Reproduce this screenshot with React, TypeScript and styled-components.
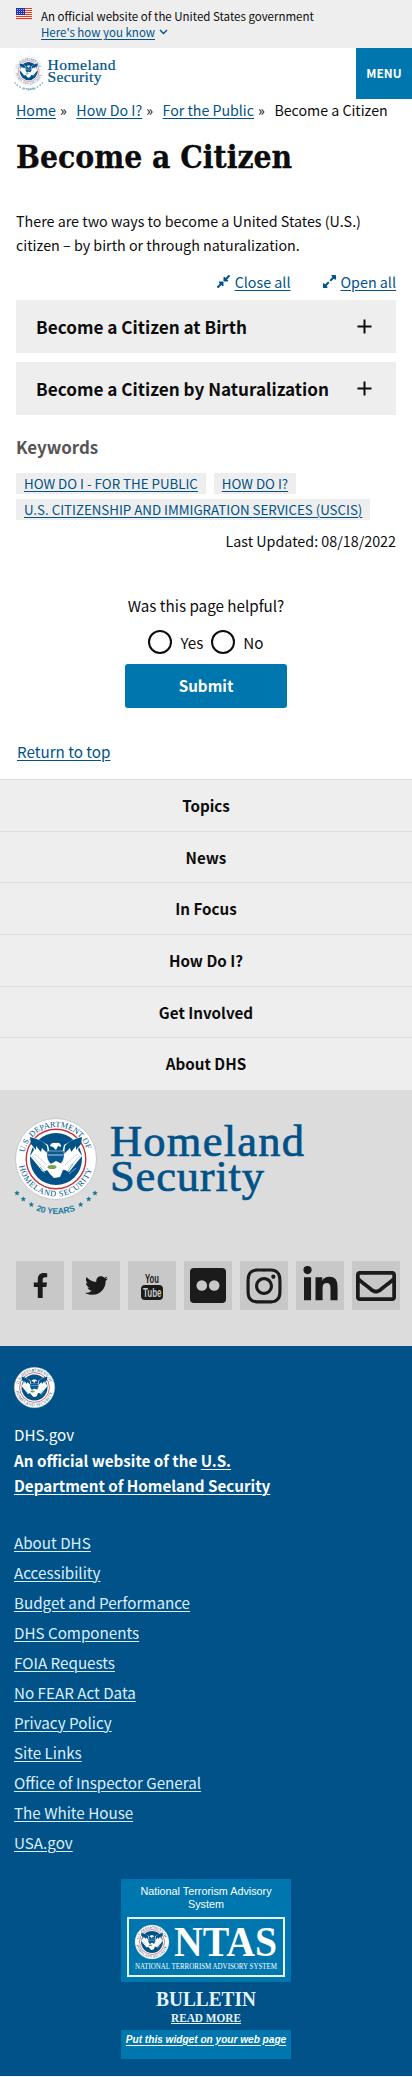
import React from 'react';
import styled, { createGlobalStyle } from 'styled-components';
import { FaFacebookF, FaTwitter, FaInstagram, FaLinkedinIn, FaRegEnvelope, FaCompressAlt, FaExpandAlt } from 'react-icons/fa';

const sans = `"Noto Sans CJK SC", "Noto Sans", sans-serif`;
const GlobalStyle = createGlobalStyle`
  *, *::before, *::after { box-sizing: border-box; }
  body { margin: 0; background: #fff; }
  h1, h2, h3, p, ul { margin: 0; padding: 0; }
  ul { list-style: none; }
  svg { display: block; overflow: visible; }
`;

const Page = styled.div`
  width: 412px;
  font-family: ${sans};
  font-size: 15.2px;
  line-height: 24px;
  color: #0c0c0c;
  white-space: nowrap;
`;

const Link = styled.a`
  color: #005288;
  text-decoration: underline;
  text-decoration-thickness: 1px;
  text-underline-offset: 2px;
`;

const Banner = styled.header`
  display: flex;
  height: 48px;
  padding: 8px 16px 0;
  gap: 9px;
  background: #eee;
  font-size: 11.5px;
  line-height: 16px;
  svg { flex: none; }
`;
const BannerToggle = styled.div`
  display: flex;
  align-items: center;
  gap: 4px;
`;

const Masthead = styled.div`
  display: flex;
  justify-content: space-between;
  height: 50px;
  padding-left: 14px;
`;
const HomeLink = styled.a`
  padding-top: 8px;
`;
const MenuButton = styled.button`
  width: 56px;
  height: 51px;
  border: 0;
  padding: 0 0 2px;
  background: #0076ae;
  color: #fff;
  font: bold 11.9px/48px ${sans};
`;

const Breadcrumb = styled.nav`
  display: flex;
  height: 24px;
  padding-left: 16px;
  gap: 9.6px;
  font-size: 14.2px;
  line-height: 24px;
`;
const Crumb = styled.span`
  display: flex;
  gap: 4px;
`;

const Main = styled.main`
  padding: 0 16px;
`;
const Title = styled.h1`
  height: 87px;
  padding-top: 15px;
  font: bold 31.5px/40px "DejaVu Serif Condensed", "DejaVu Serif", serif;
  -webkit-text-stroke: 0.3px #0c0c0c;
`;
const Intro = styled.p`
  font-size: 14.3px;
`;
const Controls = styled.div`
  display: flex;
  justify-content: flex-end;
  gap: 31px;
  height: 43px;
  padding-top: 13px;
  font-size: 14.3px;
`;
const Control = styled.span`
  display: flex;
  gap: 4px;
  color: #005288;
  svg { margin-top: 4px; }
`;
const Accordion = styled.div`
  display: flex;
  flex-direction: column;
  gap: 9px;
`;
const AccordionItem = styled.h2`
  display: flex;
  align-items: center;
  justify-content: space-between;
  height: 53px;
  padding: 0 24px 0 20px;
  background: #eee;
  font-size: 17.15px;
  line-height: 53px;
`;
const KeywordsTitle = styled.h3`
  margin-top: 20px;
  color: #555;
  font-size: 16.9px;
  line-height: 24px;
`;
const Tags = styled.div`
  display: flex;
  flex-wrap: wrap;
  gap: 5px 8px;
  margin-top: 14px;
`;
const Tag = styled.span`
  padding: 0 8px;
  height: 21px;
  background: #eee;
  font-size: 13.3px;
  line-height: 21px;
`;
const Updated = styled.p`
  margin-top: 8px;
  font-size: 14.3px;
  line-height: 25px;
  text-align: right;
`;
const Feedback = styled.form`
  display: flex;
  flex-direction: column;
  align-items: center;
  margin-top: 40px;
`;
const Choices = styled.div`
  display: flex;
  align-items: center;
  gap: 8px;
  height: 24px;
  margin-top: 13px;
`;
const Choice = styled.label`
  display: flex;
  align-items: center;
  gap: 8px;
`;
const Radio = styled.span`
  width: 24px;
  height: 24px;
  border: 2px solid #0c0c0c;
  border-radius: 50%;
`;
const Submit = styled.button`
  width: 162px;
  height: 44px;
  margin-top: 10px;
  padding: 0 0 2px;
  border: 0;
  border-radius: 3px;
  background: #0076ae;
  color: #fff;
  font: bold 15.2px/42px ${sans};
`;
const ReturnTop = styled.div`
  height: 40px;
  margin-top: 31px;
  padding: 0 1px;
`;

const FooterNav = styled.nav`
  height: 311px;
  background: #eee;
`;
const FooterNavItem = styled.div`
  height: 51.7px;
  border-top: 1px solid #dfdfdf;
  text-align: center;
  font-weight: bold;
  line-height: 51px;
`;

const SocialSection = styled.section`
  height: 256px;
  padding: 26px 12px 0 14px;
  background: #dcdcdc;
`;
const SocialRow = styled.div`
  display: flex;
  gap: 8px;
  margin: 45px 0 0 2px;
`;
const SocialTile = styled.a`
  display: flex;
  align-items: center;
  justify-content: center;
  width: 48px;
  height: 49px;
  background: #c8c8c8;
  color: #1b1b1b;
`;

const Identifier = styled.footer`
  height: 730px;
  padding: 21px 14px 0;
  background: #005288;
  color: #fff;
  ${Link} { color: inherit; }
`;
const Agency = styled.div`
  margin-top: 14px;
  line-height: 25.5px;
`;
const AgencyName = styled.p`
  font-weight: bold;
`;
const FooterLinks = styled.ul`
  margin-top: 28px;
  color: #dceefb;
  li { height: 30px; line-height: 30px; }
`;

const Widget = styled.aside`
  display: flex;
  flex-direction: column;
  align-items: center;
  width: 170px;
  margin: 22px auto 0;
  font-family: "Liberation Sans", Arial, sans-serif;
`;
const WidgetTop = styled.div`
  width: 100%;
  height: 103px;
  padding: 6px 6px 0;
  background: #0076ae;
  font-size: 10.8px;
  line-height: 13px;
  text-align: center;
  svg { margin-top: 6px; }
`;
const Bulletin = styled.div`
  height: 48px;
  padding-top: 10px;
  color: #e4f4fc;
`;
const WidgetBottom = styled.div`
  width: 100%;
  height: 29px;
  padding-top: 3px;
  background: #0076ae;
  font-size: 10.1px;
  line-height: 13px;
  font-style: italic;
  font-weight: bold;
  text-align: center;
`;

/* Department seal, centred on 0,0 with a radius of 40 */
const SealArt = ({ id }: { id: string }) => (
  <g>
    <defs>
      <path id={`${id}-top`} d="M-31.5 -6.5 A32.2 32.2 0 0 1 31.5 -6.5" />
      <path id={`${id}-bottom`} d="M-37 7 A37.7 37.7 0 0 0 37 7" />
    </defs>
    <circle r="40.5" fill="#fff" stroke="#b5bcc0" strokeWidth=".7" />
    <g fill="#005288" fontFamily="Liberation Serif, serif" fontSize="8.2">
      <text textLength="84"><textPath href={`#${id}-top`} textLength="84">U.S. DEPARTMENT OF</textPath></text>
      <text textLength="100"><textPath href={`#${id}-bottom`} textLength="100">HOMELAND SECURITY</textPath></text>
    </g>
    <circle r="29.8" fill="#fff" stroke="#c8323e" strokeWidth="1.4" />
    <circle r="26" fill="#005288" />
    <path d="M-26 -22 Q-20 -22 -15 -18 L-8 -14 L-3 8 L-13 13 L-26 -3 L-22 -9 Z M26 -22 Q20 -22 15 -18 L8 -14 L3 8 L13 13 L26 -3 L22 -9 Z" fill="#fff" />
    <path d="M-26 -22 Q-13 -19 -9 -13 L-8 -5 L-14 -11 L-15 -7 L-20 -13 L-20 -9 L-25 -15 Z M26 -22 Q13 -19 9 -13 L8 -5 L14 -11 L15 -7 L20 -13 L20 -9 L25 -15 Z" fill="#005288" />
    <path d="M-24 -3 L-12 9 M-21 -5 L-9 6 M24 -3 L12 9 M21 -5 L9 6" stroke="#b9d0df" strokeWidth=".8" />
    <path d="M-6 -13 Q-5 -17 0 -16 Q5 -17 5 -12 L2 -13 L0 -9 L-3 -12 Z" fill="#fff" />
    <path d="M-9 -8 H8 V-2 Q7 5 0 8 Q-8 5 -9 -2 Z" fill="#0a5a91" stroke="#dce8ef" strokeWidth=".5" />
    <path d="M-8 -4 H7" stroke="#fff" strokeWidth=".7" />
    <path d="M-7 6 L0 2 L8 6 L13 11 L7 11 L4 18 L-2 19 L-6 15 L-9 11 L-15 12 Z" fill="#fff" />
    <ellipse cx="-4" cy="8" rx="4.5" ry="2" fill="#7ba052" />
    <path d="M-16 8 L-11 14 M17 5 L12 12 M20 9 L13 15" stroke="#75a5c4" strokeWidth="1" />
  </g>
);

const Seal = ({ id, size }: { id: string; size: number }) => (
  <svg width={size} height={size} viewBox="-41 -41 82 82"><SealArt id={id} /></svg>
);

const starPoints = '0,-2.4 .7,-.8 2.4,-.7 1.1,.4 1.5,2.1 0,1.2 -1.5,2.1 -1.1,.4 -2.4,-.7 -.7,-.8';
const stars = [[-39, 34], [-32.7, 40], [-24.7, 45.5], [24.7, 45.5], [32.7, 40], [39, 34]];

const Logo = ({ id, scale }: { id: string; scale: number }) => (
  <svg width={294 * scale} height={100 * scale} viewBox="0 0 294 100">
    <g transform="translate(42 43)">
      <SealArt id={id} />
      <g fill="#197a9e">
        {stars.map(([x, y]) => <polygon key={x} points={starPoints} transform={`translate(${x} ${y}) scale(1.15)`} />)}
        <path id={`${id}-years`} d="M-20 51.5 A60 60 0 0 0 20 51.5" fill="none" />
        <text fontFamily={'"Liberation Sans", sans-serif'} fontSize="8.5" fontWeight="bold">
          <textPath href={`#${id}-years`} textLength="40">20 YEARS</textPath>
        </text>
      </g>
    </g>
    <text fill="#005288" stroke="#005288" strokeWidth=".7" fontFamily="Liberation Serif, serif" fontSize="44.5">
      <tspan x="96" y="39.5" textLength="194">Homeland</tspan>
      <tspan x="96" y="74.5" textLength="154">Security</tspan>
    </text>
  </svg>
);

const Flag = () => (
  <svg width="16" height="11" viewBox="0 0 16 11">
    <rect width="16" height="11" fill="#fff" />
    {[0, 2, 4, 6, 8, 10].map((y) => <rect key={y} y={y} width="16" height="1.1" fill="#db3e1f" />)}
    <rect width="9" height="7" fill="#1e33b1" />
    {[1, 3, 5].map((y) => [1, 3, 5, 7].map((x) => <rect key={`${x}${y}`} x={x} y={y} width=".8" height=".8" fill="#fff" />))}
  </svg>
);

const Plus = () => (
  <svg width="15" height="15" viewBox="0 0 15 15"><path d="M7.5 0.5V14.5M.5 7.5H14.5" stroke="#0c0c0c" strokeWidth="2" /></svg>
);

const YouTube = () => (
  <svg width="24" height="28" viewBox="0 0 24 28" fontFamily="Liberation Sans Narrow, Liberation Sans, sans-serif" fontWeight="bold">
    <text x="5" y="11" fontSize="12.5" textLength="14" lengthAdjust="spacingAndGlyphs" fill="#1b1b1b">You</text>
    <rect x="1" y="13" width="22" height="15" rx="4" fill="#1b1b1b" />
    <text x="3" y="25" fontSize="12.5" textLength="18.5" lengthAdjust="spacingAndGlyphs" fill="#c8c8c8">Tube</text>
  </svg>
);

const Flickr = () => (
  <svg width="36" height="35" viewBox="0 0 36 35">
    <rect width="36" height="35" rx="4" fill="#1b1b1b" />
    <circle cx="11.8" cy="17.5" r="5.3" fill="#c8c8c8" />
    <circle cx="24.2" cy="17.5" r="5.3" fill="#c8c8c8" />
  </svg>
);

const Ntas = () => (
  <svg width="158" height="60" viewBox="0 0 158 60">
    <rect x="1" y="1" width="156" height="58" fill="none" stroke="#e8f8ff" strokeWidth="2" />
    <g transform="translate(25 25) scale(.42)"><SealArt id="ntas" /></g>
    <g fill="#fff" fontFamily="Liberation Serif, serif">
      <text x="47" y="39" fontSize="42" fontWeight="bold" textLength="103" lengthAdjust="spacingAndGlyphs">NTAS</text>
      <text x="8" y="51.5" fontSize="7.6" textLength="142" lengthAdjust="spacingAndGlyphs">NATIONAL TERRORISM ADVISORY SYSTEM</text>
    </g>
  </svg>
);

const BulletinArt = () => (
  <svg width="102" height="34" viewBox="0 0 102 34" fill="#e4f4fc" fontFamily="Liberation Serif, serif" fontWeight="bold">
    <text x="1" y="14" fontSize="21" textLength="100" lengthAdjust="spacingAndGlyphs">BULLETIN</text>
    <text x="16" y="29.5" fontSize="13.5" textLength="70" lengthAdjust="spacingAndGlyphs">READ MORE</text>
    <rect x="16" y="31" width="70" height="1" />
  </svg>
);

const crumbs = ['Home', 'How Do I?', 'For the Public'];
const accordions = ['Become a Citizen at Birth', 'Become a Citizen by Naturalization'];
const tags = ['HOW DO I - FOR THE PUBLIC', 'HOW DO I?', 'U.S. CITIZENSHIP AND IMMIGRATION SERVICES (USCIS)'];
const sections = ['Topics', 'News', 'In Focus', 'How Do I?', 'Get Involved', 'About DHS'];
const footerLinks = [
  'About DHS', 'Accessibility', 'Budget and Performance', 'DHS Components', 'FOIA Requests', 'No FEAR Act Data',
  'Privacy Policy', 'Site Links', 'Office of Inspector General', 'The White House', 'USA.gov',
];
const socials = [
  <FaFacebookF size={25} />, <FaTwitter size={23} />, <YouTube />, <Flickr />,
  <FaInstagram size={40} />, <FaLinkedinIn size={39} />, <FaRegEnvelope size={40} />,
];

export default function App() {
  return (
    <Page>
      <GlobalStyle />
      <Banner>
        <Flag />
        <div>
          <div>An official website of the United States government</div>
          <BannerToggle>
            <Link>Here's how you know</Link>
            <svg width="9" height="6" viewBox="0 0 9 6"><path d="M1 1l3.5 3.5L8 1" fill="none" stroke="#005288" strokeWidth="1.4" /></svg>
          </BannerToggle>
        </div>
      </Banner>
      <Masthead>
        <HomeLink><Logo id="header-logo" scale={0.35} /></HomeLink>
        <MenuButton>MENU</MenuButton>
      </Masthead>
      <Breadcrumb>
        {crumbs.map((c) => <Crumb key={c}><Link>{c}</Link><span>»</span></Crumb>)}
        <span>Become a Citizen</span>
      </Breadcrumb>
      <Main>
        <Title>Become a Citizen</Title>
        <Intro>There are two ways to become a United States (U.S.)<br />citizen – by birth or through naturalization.</Intro>
        <Controls>
          <Control><FaCompressAlt size={15} /><Link>Close all</Link></Control>
          <Control><FaExpandAlt size={15} /><Link>Open all</Link></Control>
        </Controls>
        <Accordion>
          {accordions.map((a) => <AccordionItem key={a}>{a}<Plus /></AccordionItem>)}
        </Accordion>
        <KeywordsTitle>Keywords</KeywordsTitle>
        <Tags>{tags.map((t) => <Tag key={t}><Link>{t}</Link></Tag>)}</Tags>
        <Updated>Last Updated: 08/18/2022</Updated>
        <Feedback>
          <p>Was this page helpful?</p>
          <Choices>
            <Choice><Radio />Yes</Choice>
            <Choice><Radio />No</Choice>
          </Choices>
          <Submit type="button">Submit</Submit>
        </Feedback>
        <ReturnTop><Link>Return to top</Link></ReturnTop>
      </Main>
      <FooterNav>{sections.map((s) => <FooterNavItem key={s}>{s}</FooterNavItem>)}</FooterNav>
      <SocialSection>
        <Logo id="footer-logo" scale={1} />
        <SocialRow>{socials.map((icon, i) => <SocialTile key={i}>{icon}</SocialTile>)}</SocialRow>
      </SocialSection>
      <Identifier>
        <Seal id="identifier-seal" size={41} />
        <Agency>
          <p>DHS.gov</p>
          <AgencyName>An official website of the <Link>U.S.<br />Department of Homeland Security</Link></AgencyName>
        </Agency>
        <FooterLinks>{footerLinks.map((l) => <li key={l}><Link>{l}</Link></li>)}</FooterLinks>
        <Widget>
          <WidgetTop>National Terrorism Advisory<br />System<Ntas /></WidgetTop>
          <Bulletin><BulletinArt /></Bulletin>
          <WidgetBottom><Link>Put this widget on your web page</Link></WidgetBottom>
        </Widget>
      </Identifier>
    </Page>
  );
}
